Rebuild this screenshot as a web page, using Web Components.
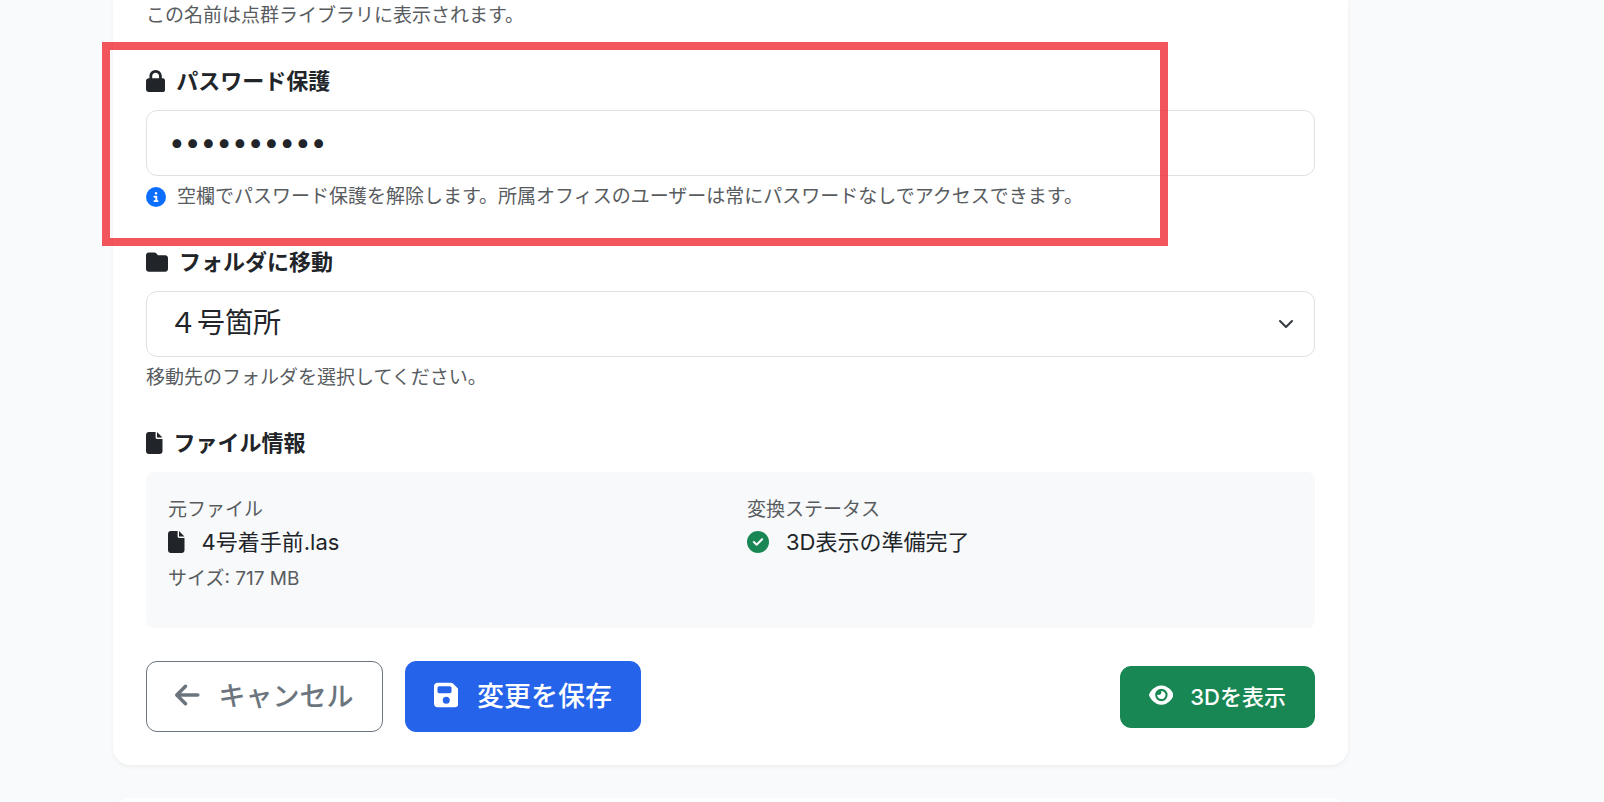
<!DOCTYPE html>
<html lang="ja">
<head>
<meta charset="utf-8">
<meta name="viewport" content="width=device-width, initial-scale=1">
<title>点群ファイルの編集</title>
<style>
  body {
    margin: 0;
    background-color: #f8fafc;
    color: #212529;
    font-family: Inter, "Noto Sans CJK JP", sans-serif;
    font-size: 22px;
    line-height: 33px;
  }
</style>
</head>
<body>
<edit-page></edit-page>

<script>
const ICONS = {
  lock: [448, 'M144 144v48H304V144c0-44.2-35.8-80-80-80s-80 35.8-80 80zM80 192V144C80 64.5 144.5 0 224 0s144 64.5 144 144v48h16c35.3 0 64 28.7 64 64V448c0 35.3-28.7 64-64 64H64c-35.3 0-64-28.7-64-64V256c0-35.3 28.7-64 64-64H80z'],
  folder: [512, 'M64 480H448c35.3 0 64-28.7 64-64V160c0-35.3-28.7-64-64-64H288c-10.1 0-19.6-4.7-25.6-12.8L243.2 57.6C231.1 41.5 212.1 32 192 32H64C28.7 32 0 60.7 0 96V416c0 35.3 28.7 64 64 64z'],
  file: [384, 'M0 64C0 28.7 28.7 0 64 0H224V128c0 17.7 14.3 32 32 32H384V448c0 35.3-28.7 64-64 64H64c-35.3 0-64-28.7-64-64V64zm384 64H256V0L384 128z'],
  info: [512, 'M256 512A256 256 0 1 0 256 0a256 256 0 1 0 0 512zM216 336h24V272H216c-13.3 0-24-10.7-24-24s10.7-24 24-24h48c13.3 0 24 10.7 24 24v88h8c13.3 0 24 10.7 24 24s-10.7 24-24 24H216c-13.3 0-24-10.7-24-24s10.7-24 24-24zm40-208a32 32 0 1 1 0 64 32 32 0 1 1 0-64z'],
  check: [512, 'M256 512A256 256 0 1 0 256 0a256 256 0 1 0 0 512zM369 209L241 337c-9.4 9.4-24.6 9.4-33.9 0l-64-64c-9.4-9.4-9.4-24.6 0-33.9s24.6-9.4 33.9 0l47 47L335 175c9.4-9.4 24.6-9.4 33.9 0s9.4 24.6 0 33.9z'],
  back: [448, 'M9.4 233.4c-12.5 12.5-12.5 32.8 0 45.3l160 160c12.5 12.5 32.8 12.5 45.3 0s12.5-32.8 0-45.3L109.2 288 416 288c17.7 0 32-14.3 32-32s-14.3-32-32-32l-306.7 0L214.6 118.6c12.5-12.5 12.5-32.8 0-45.3s-32.8-12.5-45.3 0l-160 160z'],
  save: [448, 'M64 32C28.7 32 0 60.7 0 96V416c0 35.3 28.7 64 64 64H384c35.3 0 64-28.7 64-64V173.3c0-17-6.7-33.3-18.7-45.3L352 50.7C340 38.7 323.7 32 306.7 32H64zm0 96c0-17.7 14.3-32 32-32H288c17.7 0 32 14.3 32 32v64c0 17.7-14.3 32-32 32H96c-17.7 0-32-14.3-32-32V128zM224 288a64 64 0 1 1 0 128 64 64 0 1 1 0-128z'],
  eye: [576, 'M288 32c-80.8 0-145.5 36.8-192.6 80.6C48.6 156 17.3 208 2.5 243.7c-3.3 7.9-3.3 16.7 0 24.6C17.3 304 48.6 356 95.4 399.4C142.5 443.2 207.2 480 288 480s145.5-36.8 192.6-80.6c46.8-43.5 78.1-95.4 93-131.1c3.3-7.9 3.3-16.7 0-24.6c-14.9-35.7-46.2-87.7-93-131.1C433.5 68.8 368.8 32 288 32zM144 256a144 144 0 1 1 288 0 144 144 0 1 1-288 0zm144-64c0 35.3-28.7 64-64 64c-7.1 0-13.9-1.2-20.3-3.3c-5.5-1.8-11.9 1.6-11.7 7.4c.3 6.9 1.3 13.8 3.2 20.7c13.7 51.2 66.4 81.6 117.6 67.9s81.6-66.4 67.9-117.6c-11.1-41.5-47.8-69.4-88.6-71.1c-5.8-.2-9.2 6.1-7.4 11.7c2.1 6.4 3.3 13.2 3.3 20.3z']
};

// label row shared by the fields and the file section
const LABEL_STYLE = `
  label, h2 {
    display: flex;
    align-items: center;
    gap: 11px;
    margin: 0 0 14px;
    font-size: 22px;
    line-height: 30px;
    font-weight: 600;
  }
`;

class SvgIcon extends HTMLElement {
  constructor() {
    super();
    this.attachShadow({mode: 'open'});
  }

  connectedCallback() {
    const [width, path] = ICONS[this.getAttribute('name')];
    this.shadowRoot.innerHTML = `
      <style>
        :host { display: inline-flex; flex: none; }
        svg { display: block; height: 1em; fill: currentColor; }
      </style>
      <svg viewBox="0 0 ${width} 512" aria-hidden="true"><path d="${path}"/></svg>
    `;
  }
}
customElements.define('svg-icon', SvgIcon);

class PageCard extends HTMLElement {
  constructor() {
    super();
    this.attachShadow({mode: 'open'}).innerHTML = `
      <style>
        :host {
          display: block;
          flex: none;
          padding: 33px;
          border-radius: 17px;
          background-color: #fff;
          box-shadow: 0 2px 4px rgba(0, 0, 0, 0.05);
        }
        :host([continued]) {
          padding-top: 1px;
          border-top-left-radius: 0;
          border-top-right-radius: 0;
        }
      </style>
      <slot></slot>
    `;
  }
}
customElements.define('page-card', PageCard);

class HelpText extends HTMLElement {
  constructor() {
    super();
    this.attachShadow({mode: 'open'}).innerHTML = `
      <style>
        :host {
          display: flex;
          align-items: center;
          gap: 11px;
          color: #585c5f;
          font-size: 19px;
          line-height: 29px;
        }
        ::slotted(svg-icon) { color: #0d6efd; font-size: 20px; }
      </style>
      <slot></slot>
    `;
  }
}
customElements.define('help-text', HelpText);

class PasswordField extends HTMLElement {
  constructor() {
    super();
    this.attachShadow({mode: 'open'});
  }

  connectedCallback() {
    this.shadowRoot.innerHTML = `
      <style>
        ${LABEL_STYLE}
        :host { display: block; position: relative; }
        input {
          display: block;
          box-sizing: border-box;
          width: 100%;
          height: 66px;
          margin-bottom: 6px;
          padding: 10px 22px 12px;
          border: 1px solid #dee2e6;
          border-radius: 11px;
          background-color: #fff;
          color: inherit;
          font-family: inherit;
          font-size: 28px;
        }
        .highlight {
          position: absolute;
          top: -24px;
          right: 147px;
          bottom: -35px;
          left: -44px;
          border: 8px solid rgba(240, 42, 52, 0.8);
          pointer-events: none;
        }
      </style>
      <label for="password"><svg-icon name="lock"></svg-icon>${this.getAttribute('label')}</label>
      <input id="password" type="password" value="${this.getAttribute('value')}">
      <slot></slot>
      <div class="highlight"></div>
    `;
  }
}
customElements.define('password-field', PasswordField);

class FolderField extends HTMLElement {
  constructor() {
    super();
    this.attachShadow({mode: 'open'});
  }

  connectedCallback() {
    this.shadowRoot.innerHTML = `
      <style>
        ${LABEL_STYLE}
        :host { display: block; }
        .control {
          display: grid;
          align-items: center;
          margin-bottom: 6px;
        }
        select, .arrow { grid-area: 1 / 1; }
        select {
          appearance: none;
          width: 100%;
          height: 66px;
          padding: 10px 60px 12px 22px;
          border: 1px solid #dee2e6;
          border-radius: 11px;
          background-color: #fff;
          color: inherit;
          font-family: inherit;
          font-size: 28px;
        }
        .arrow {
          justify-self: end;
          width: 16px;
          height: 16px;
          margin-right: 21px;
          fill: none;
          stroke: #343a40;
          stroke-width: 2;
          stroke-linecap: round;
          stroke-linejoin: round;
          pointer-events: none;
        }
      </style>
      <label for="folder"><svg-icon name="folder"></svg-icon>${this.getAttribute('label')}</label>
      <div class="control">
        <select id="folder"><option>${this.getAttribute('value')}</option></select>
        <svg class="arrow" viewBox="0 0 16 16" aria-hidden="true"><path d="m2 5 6 6 6-6"/></svg>
      </div>
      <slot></slot>
    `;
  }
}
customElements.define('folder-field', FolderField);

class FileInfo extends HTMLElement {
  constructor() {
    super();
    this.attachShadow({mode: 'open'});
  }

  connectedCallback() {
    this.shadowRoot.innerHTML = `
      <style>
        ${LABEL_STYLE}
        :host { display: block; }
        .panel {
          display: grid;
          grid-template-columns: 1fr 1fr;
          gap: 33px;
          padding: 23px 22px 35px;
          border-radius: 8px;
          background-color: #f8f9fa;
        }
        .row {
          display: flex;
          align-items: center;
          gap: 17px;
          margin-bottom: 4px;
          line-height: 36px;
        }
        .done { color: #198754; }
      </style>
      <h2><svg-icon name="file"></svg-icon>${this.getAttribute('label')}</h2>
      <div class="panel">
        <div>
          <help-text>元ファイル</help-text>
          <div class="row"><svg-icon name="file"></svg-icon><slot name="file"></slot></div>
          <help-text><slot name="size"></slot></help-text>
        </div>
        <div>
          <help-text>変換ステータス</help-text>
          <div class="row"><svg-icon class="done" name="check"></svg-icon><slot name="status"></slot></div>
        </div>
      </div>
    `;
  }
}
customElements.define('file-info', FileInfo);

class ActionButton extends HTMLElement {
  constructor() {
    super();
    this.attachShadow({mode: 'open'});
  }

  connectedCallback() {
    this.shadowRoot.innerHTML = `
      <style>
        :host { display: block; }
        button {
          display: flex;
          align-items: center;
          gap: 19px;
          height: 71px;
          padding: 0 28px 4px;
          border: 1px solid #2563eb;
          border-radius: 11px;
          background-color: #2563eb;
          color: #fff;
          font-family: inherit;
          font-size: 27px;
          font-weight: 500;
          white-space: nowrap;
          cursor: pointer;
        }
        svg-icon { font-size: 28px; }
        :host([variant="outline"]) button {
          border-color: #6c757d;
          background-color: transparent;
          color: #6c757d;
        }
        :host([variant="success"]) button {
          gap: 17px;
          height: 62px;
          border-color: #198754;
          background-color: #198754;
          font-size: 22px;
        }
        :host([variant="success"]) svg-icon { font-size: 22px; }
      </style>
      <button type="button"><svg-icon name="${this.getAttribute('icon')}"></svg-icon><slot></slot></button>
    `;
  }
}
customElements.define('action-button', ActionButton);

class EditPage extends HTMLElement {
  constructor() {
    super();
    this.attachShadow({mode: 'open'}).innerHTML = `
      <style>
        :host {
          display: flex;
          flex-direction: column;
          gap: 33px;
          box-sizing: border-box;
          height: 100vh;
          padding: 0 256px 0 113px;
          overflow: hidden;
        }
        form {
          display: flex;
          flex-direction: column;
          gap: 36px;
        }
        .actions {
          display: flex;
          align-items: center;
          gap: 22px;
          margin-top: 33px;
        }
        .view { margin-left: auto; }
      </style>
      <page-card continued>
        <form>
          <help-text>この名前は点群ライブラリに表示されます。</help-text>
          <password-field label="パスワード保護" value="pointcloud">
            <help-text><svg-icon name="info"></svg-icon>空欄でパスワード保護を解除します。所属オフィスのユーザーは常にパスワードなしでアクセスできます。</help-text>
          </password-field>
          <folder-field label="フォルダに移動" value="４号箇所">
            <help-text>移動先のフォルダを選択してください。</help-text>
          </folder-field>
          <file-info label="ファイル情報">
            <span slot="file">4号着手前.las</span>
            <span slot="size">サイズ: 717 MB</span>
            <span slot="status">3D表示の準備完了</span>
          </file-info>
        </form>
        <div class="actions">
          <action-button variant="outline" icon="back">キャンセル</action-button>
          <action-button icon="save">変更を保存</action-button>
          <action-button class="view" variant="success" icon="eye">3Dを表示</action-button>
        </div>
      </page-card>
      <page-card></page-card>
    `;
  }
}
customElements.define('edit-page', EditPage);
</script>
</body>
</html>
